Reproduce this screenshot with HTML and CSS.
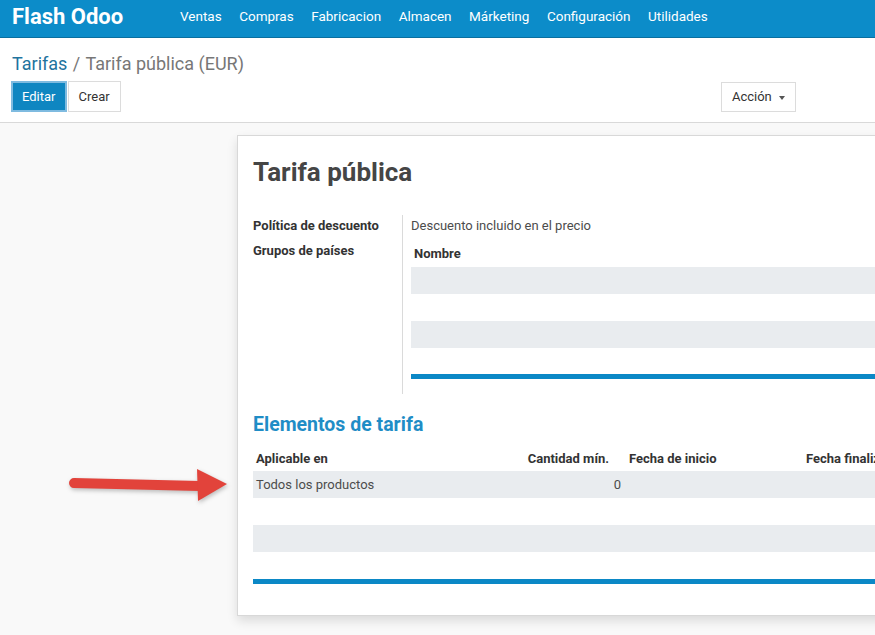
FILE: index.html
```html
<!DOCTYPE html>
<html>
  <head>
    <title>Tarifa pública - Flash Odoo</title>
    <link rel="stylesheet" href="styles.css">
  </head>
  <body>

    <div class="navbar">
      <span class="brand">Flash Odoo</span>
      <ul class="menu">
        <li>Ventas</li>
        <li>Compras</li>
        <li>Fabricacion</li>
        <li>Almacen</li>
        <li>Márketing</li>
        <li>Configuración</li>
        <li>Utilidades</li>
      </ul>
    </div>

    <div class="control-panel">
      <div class="breadcrumb">
        <span class="crumb-link">Tarifas</span>
        <span class="crumb-sep">/</span>
        <span class="crumb-active">Tarifa pública (EUR)</span>
      </div>
      <div class="buttons">
        <div class="btn-group">
          <button class="btn btn-primary">Editar</button>
          <button class="btn">Crear</button>
        </div>
        <button class="btn btn-action">Acción <span class="caret"></span></button>
      </div>
    </div>

    <div class="content">
      <div class="sheet">
        <h1 class="title">Tarifa pública</h1>

        <div class="group">
          <div class="labels">
            <div class="label">Política de descuento</div>
            <div class="label">Grupos de países</div>
          </div>
          <div class="values">
            <div class="value">Descuento incluido en el precio</div>
            <table class="list small">
              <thead>
                <tr><th>Nombre</th></tr>
              </thead>
              <tbody>
                <tr class="odd"><td></td></tr>
                <tr><td></td></tr>
                <tr class="odd"><td></td></tr>
                <tr class="last"><td></td></tr>
              </tbody>
            </table>
            <div class="list-foot"></div>
          </div>
        </div>

        <h2 class="section">Elementos de tarifa</h2>

        <table class="list items">
          <thead>
            <tr>
              <th class="c-apply">Aplicable en</th>
              <th class="c-qty">Cantidad mín.</th>
              <th class="c-start">Fecha de inicio</th>
              <th class="c-end">Fecha finalización</th>
            </tr>
          </thead>
          <tbody>
            <tr class="odd">
              <td>Todos los productos</td>
              <td class="num">0</td>
              <td></td>
              <td></td>
            </tr>
            <tr><td></td><td></td><td></td><td></td></tr>
            <tr class="odd"><td></td><td></td><td></td><td></td></tr>
            <tr><td></td><td></td><td></td><td></td></tr>
          </tbody>
        </table>
        <div class="list-foot"></div>
      </div>

      <svg class="arrow" width="175" height="48" viewBox="0 0 175 48">
        <line x1="14" y1="22" x2="140" y2="25" stroke="#e2433b" stroke-width="10" stroke-linecap="round"/>
        <polygon points="137,8 167,23 138,40" fill="#e2433b"/>
      </svg>
    </div>

  </body>
</html>
```

FILE: styles.css
```css
html, body {
  margin: 0;
  padding: 0;
  overflow: hidden;
}

body {
  font-family: Roboto, "Noto Sans", sans-serif;
  font-size: 13px;
  color: #4c4c4c;
  background-color: #f9f9f9;
  height: 635px;
}

/* top bar */
.navbar {
  display: flex;
  align-items: center;
  height: 32px;
  padding-bottom: 5px;
  background-color: #0c8cc9;
  border-bottom: 1px solid #0a6f9f;
  color: #fff;
}

.brand {
  font-size: 22px;
  font-weight: bold;
  margin-left: 12px;
  width: 168px;
}

.menu {
  display: flex;
  list-style: none;
  margin: 0;
  padding: 0;
  gap: 17.5px;
  font-size: 13.5px;
}

/* control panel */
.control-panel {
  background-color: #fff;
  border-bottom: 1px solid #d9d9d9;
  padding: 14px 0 10px 12px;
}

.breadcrumb {
  font-size: 18px;
  line-height: 24px;
  height: 29px;
}

.crumb-link {
  color: #21739e;
}

.crumb-sep {
  color: #777;
  margin: 0 1px;
}

.crumb-active {
  color: #777;
}

.buttons {
  display: flex;
  justify-content: space-between;
  align-items: center;
  width: 784px;
}

.btn-group {
  display: flex;
  gap: 1px;
}

.btn {
  font-family: Roboto, sans-serif;
  font-size: 13px;
  color: #333;
  background-color: #fff;
  border: 1px solid #dcdcdc;
  height: 31px;
  padding: 0 10px;
}

.btn-primary {
  background-color: #0f86c1;
  color: #fff;
  border: 2px solid #7fbbe0;
  padding: 0 9px;
  margin-left: -1px;
}

.btn-action {
  height: 30px;
  padding: 0 10px;
}

.caret {
  display: inline-block;
  border-top: 4px solid #555;
  border-left: 3px solid transparent;
  border-right: 3px solid transparent;
  vertical-align: middle;
  margin-left: 4px;
}

/* form sheet */
.content {
  position: relative;
  padding: 12px 0 0 237px;
}

.sheet {
  background-color: #fff;
  width: 700px;
  border: 1px solid #d8d8d8;
  box-shadow: 0 5px 10px rgba(0, 0, 0, 0.12);
  padding: 18px 0 31px 15px;
  box-sizing: border-box;
}

.title {
  font-size: 26px;
  font-weight: bold;
  margin: 0;
  line-height: 36px;
  color: #454545;
}

.group {
  display: flex;
  margin-top: 25px;
}

.labels {
  width: 149px;
  margin-top: -2px;
}

.label {
  font-weight: bold;
  font-size: 13px;
  line-height: 25px;
  color: #333;
}

.values {
  flex: 1;
  border-left: 1px solid #dadada;
  padding-left: 8px;
  padding-bottom: 15px;
}

.value {
  line-height: 21px;
  margin-bottom: 4px;
}

.list {
  width: 100%;
  border-collapse: collapse;
}

.list th {
  text-align: left;
  font-weight: bold;
  font-size: 13px;
  color: #333;
  padding: 0 3px;
  height: 26px;
}

.list.small th {
  height: 27px;
}

.list td {
  padding: 0 3px;
  height: 27px;
}

.list.small tr.last td {
  height: 26px;
}

.list tr.odd td {
  background-color: #e9ecef;
}

.list-foot {
  height: 5px;
  background-color: #0b88c6;
}

.section {
  font-size: 19.5px;
  font-weight: bold;
  color: #1f8dc6;
  margin: 18px 0 7px 0;
  line-height: 26px;
}

.items {
  table-layout: fixed;
}

.c-apply {
  width: 264px;
}

.c-qty {
  width: 83px;
  text-align: right !important;
  padding-right: 17px !important;
}

.c-start {
  width: 171px;
}

.items td.num {
  text-align: right;
  padding-right: 5px;
}

.arrow {
  position: absolute;
  left: 60px;
  top: 338px;
  filter: drop-shadow(1px 2px 2px rgba(0, 0, 0, 0.25));
}
```
